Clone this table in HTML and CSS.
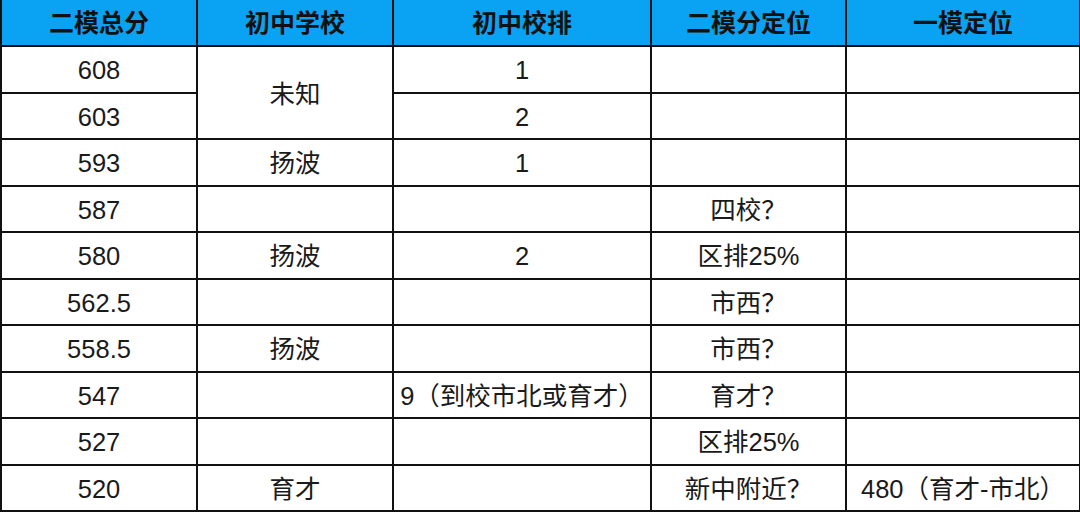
FILE: index.html
```html
<!DOCTYPE html>
<html>
<head>
<meta charset="utf-8">
<link rel="stylesheet" href="styles.css">
</head>
<body>
<table class="grid">
  <colgroup>
    <col class="c1"><col class="c2"><col class="c3"><col class="c4"><col class="c5">
  </colgroup>
  <thead>
    <tr><th>二模总分</th><th>初中学校</th><th>初中校排</th><th>二模分定位</th><th>一模定位</th></tr>
  </thead>
  <tbody>
    <tr><td>608</td><td rowspan="2">未知</td><td>1</td><td></td><td></td></tr>
    <tr><td>603</td><td>2</td><td></td><td></td></tr>
    <tr><td>593</td><td>扬波</td><td>1</td><td></td><td></td></tr>
    <tr><td>587</td><td></td><td></td><td>四校？</td><td></td></tr>
    <tr><td>580</td><td>扬波</td><td>2</td><td>区排25%</td><td></td></tr>
    <tr><td>562.5</td><td></td><td></td><td>市西？</td><td></td></tr>
    <tr><td>558.5</td><td>扬波</td><td></td><td>市西？</td><td></td></tr>
    <tr><td>547</td><td></td><td>9（到校市北或育才）</td><td>育才？</td><td></td></tr>
    <tr><td>527</td><td></td><td></td><td>区排25%</td><td></td></tr>
    <tr><td>520</td><td>育才</td><td></td><td>新中附近？</td><td>480（育才-市北）</td></tr>
  </tbody>
</table>
</body>
</html>
```

FILE: styles.css
```css
html, body {
  margin: 0;
  padding: 0;
  background: #ffffff;
}
.grid {
  border-collapse: collapse;
  table-layout: fixed;
  width: 1079px;
  font-family: "Liberation Sans", "Noto Sans CJK SC", sans-serif;
  color: #1a1a1a;
}
.c1 { width: 196px; }
.c2 { width: 196px; }
.c3 { width: 258px; }
.c4 { width: 195px; }
.c5 { width: 234px; }
.grid th, .grid td {
  border: 2px solid #111111;
  text-align: center;
  vertical-align: middle;
  padding: 0;
  white-space: nowrap;
  overflow: hidden;
}
.grid th {
  background: #0aa2f2;
  height: 45px;
  font-size: 25px;
  line-height: 30px;
  font-weight: bold;
  color: #111111;
  border-top: none;
}
.grid td {
  height: 42.5px;
  font-size: 25.5px;
  line-height: 30px;
  font-weight: normal;
  padding-top: 2px;
}
```
